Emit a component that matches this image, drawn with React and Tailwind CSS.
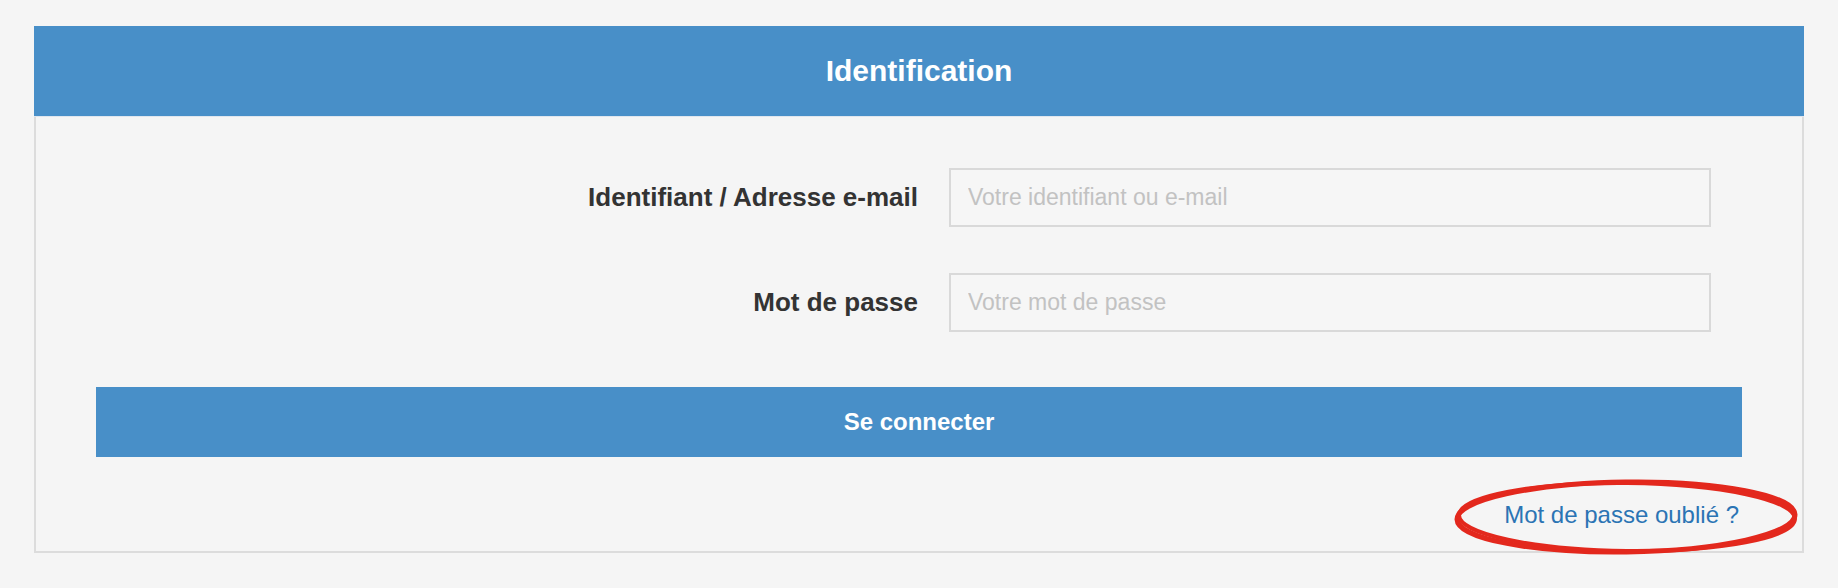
import { useState } from "react";

export default function App() {
  const [login, setLogin] = useState("");
  const [password, setPassword] = useState("");

  return (
    <div className="min-h-[588px] bg-[#f5f5f5] pt-[26px] px-[34px] font-['Liberation_Sans',Arial,sans-serif]">
      <div className="relative">
        {/* Header */}
        <div className="h-[91px] bg-[#488fc8] border-b border-[#dfe6ee] flex items-center justify-center">
          <h1 className="text-white text-[30px] font-bold leading-none">Identification</h1>
        </div>

        {/* Body */}
        <div className="border-x-2 border-b-2 border-[#dcdcdc] pt-[51px] pb-[23px] px-[60px]">
          <div className="flex flex-col gap-[46px]">
            <div className="flex items-center gap-[31px]">
              <label className="w-[822px] shrink-0 text-right text-[26px] font-bold text-[#333333]">
                Identifiant / Adresse e-mail
              </label>
              <input
                type="text"
                value={login}
                onChange={(e) => setLogin(e.target.value)}
                placeholder="Votre identifiant ou e-mail"
                className="w-[762px] h-[59px] border-2 border-[#d9d9d9] bg-[#f6f6f6] px-[17px] text-[23px] text-[#333] placeholder-[#c2c2c2] focus:outline-none"
              />
            </div>
            <div className="flex items-center gap-[31px]">
              <label className="w-[822px] shrink-0 text-right text-[26px] font-bold text-[#333333]">
                Mot de passe
              </label>
              <input
                type="password"
                value={password}
                onChange={(e) => setPassword(e.target.value)}
                placeholder="Votre mot de passe"
                className="w-[762px] h-[59px] border-2 border-[#d9d9d9] bg-[#f6f6f6] px-[17px] text-[23px] text-[#333] placeholder-[#c2c2c2] focus:outline-none"
              />
            </div>
          </div>

          <button className="mt-[55px] w-full h-[70px] bg-[#488fc8] text-white text-[24px] font-bold">
            Se connecter
          </button>

          <div className="mt-[45px] flex justify-end pr-[3px]">
            <a href="#" className="text-[24px] leading-[26px] text-[#2b74b4]">
              Mot de passe oublié ?
            </a>
          </div>
        </div>

        {/* annotation */}
        <svg
          className="absolute left-[1418px] top-[452px] pointer-events-none"
          width="350"
          height="80"
          viewBox="0 0 350 80"
        >
          <ellipse cx="174" cy="39" rx="169" ry="35" fill="none" stroke="#e3281d" strokeWidth="5" transform="rotate(-0.8 174 39)" />
          <ellipse cx="175" cy="39" rx="168" ry="34" fill="none" stroke="#e3281d" strokeWidth="4" transform="rotate(0.6 174 39)" />
        </svg>
      </div>
    </div>
  );
}
